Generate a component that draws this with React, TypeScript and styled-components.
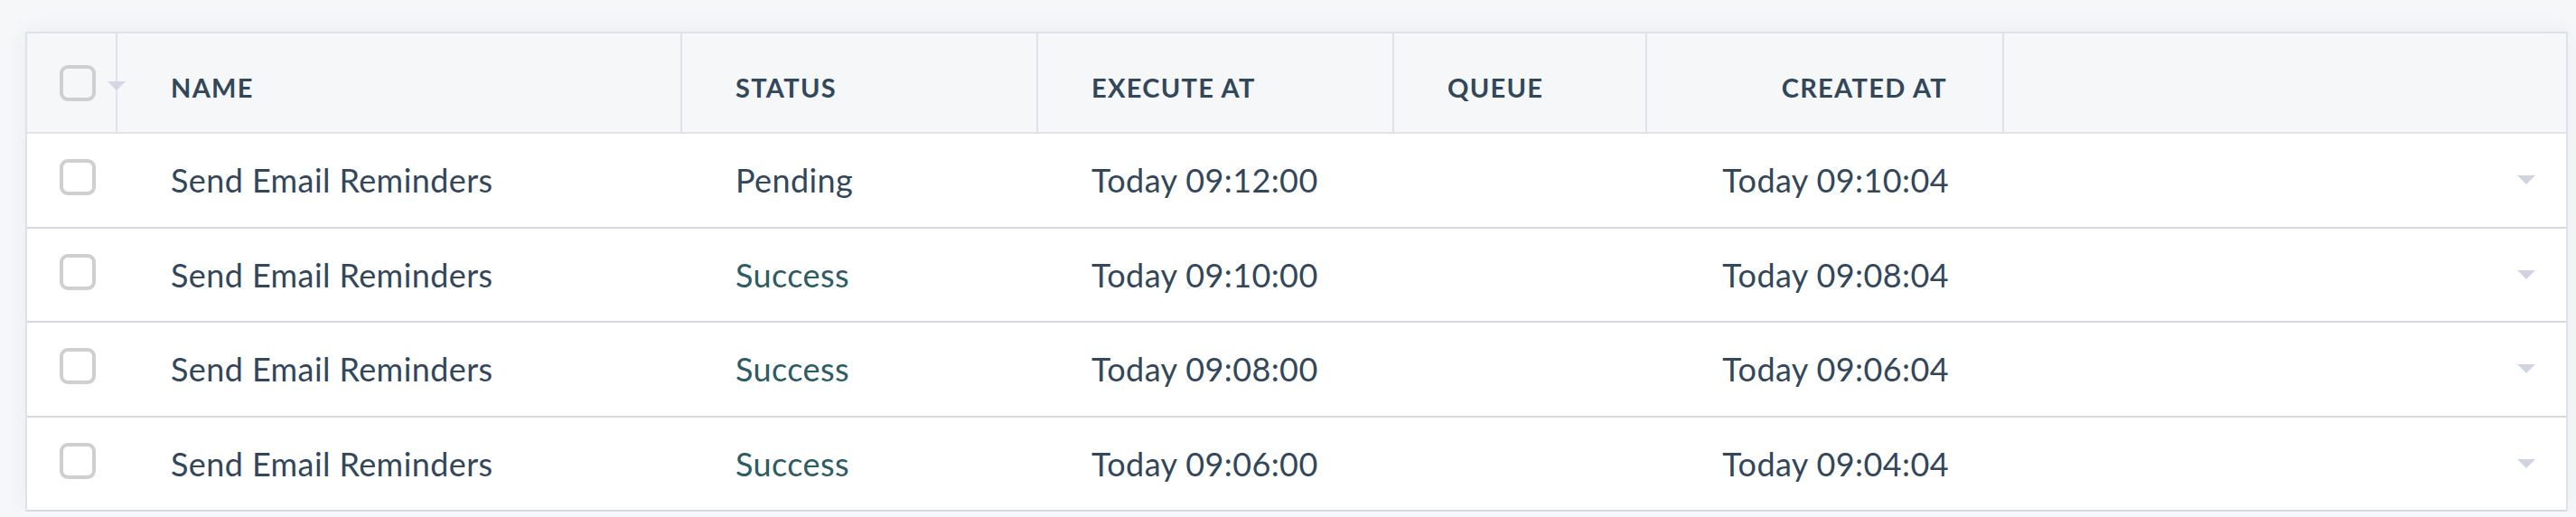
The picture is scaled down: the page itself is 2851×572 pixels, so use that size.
import * as React from 'react'
import styled, { createGlobalStyle } from 'styled-components'

const GlobalStyle = createGlobalStyle`
  body {
    margin: 0;
    background: #f5f7f9;
    font-family: Lato, "Open Sans", sans-serif;
    color: #33475b;
  }
`

const COLUMNS = '100px 625px 394px 394px 280px 395px 1fr'

const Page = styled.div`
  padding: 35px 0 0 28px;
`

const Table = styled.div`
  width: 2814px;
  box-sizing: border-box;
  border: 2px solid #dfe2ea;
  border-bottom: none;
  background: #fff;
  box-shadow: 0 0 24px rgba(45, 62, 80, 0.06);
`

const HeaderRow = styled.div`
  display: grid;
  grid-template-columns: ${COLUMNS};
  height: 109px;
  background: #f5f7f9;
  border-bottom: 2px solid #dfe2ea;
`

const HeaderCell = styled.div<{ $right?: boolean }>`
  position: relative;
  display: flex;
  align-items: center;
  justify-content: ${(p) => (p.$right ? 'flex-end' : 'flex-start')};
  padding: 10px 61px 0 59px;
  border-right: 2px solid #dfe2ea;
  font-size: 29px;
  font-weight: 700;
  letter-spacing: 1.3px;
  text-transform: uppercase;
  color: #33475b;
  &:last-child {
    border-right: none;
  }
`

const CheckCell = styled.div<{ $head?: boolean }>`
  position: relative;
  display: flex;
  align-items: center;
  padding-left: 36px;
  padding-bottom: ${(p) => (p.$head ? '0' : '6px')};
  border-right: ${(p) => (p.$head ? '2px solid #dfe2ea' : 'none')};
`

const Checkbox = styled.span<{ $head?: boolean }>`
  display: block;
  width: 40px;
  height: 40px;
  box-sizing: border-box;
  border: 4px solid #cfcfcf;
  border-radius: 9px;
  background: ${(p) => (p.$head ? 'transparent' : '#fff')};
`

const HeadCaret = styled.span`
  position: absolute;
  right: -11px;
  top: 53px;
  width: 0;
  height: 0;
  border-left: 10px solid transparent;
  border-right: 10px solid transparent;
  border-top: 10px solid #d2d7e2;
`

const Row = styled.div`
  display: grid;
  grid-template-columns: ${COLUMNS};
  height: 102.5px;
  border-bottom: 2px solid #d3d8e2;
`

const Cell = styled.div<{ $right?: boolean; $tone?: string }>`
  display: flex;
  align-items: center;
  justify-content: ${(p) => (p.$right ? 'flex-end' : 'flex-start')};
  padding: 0 61px 0 59px;
  font-size: 36px;
  letter-spacing: 0.4px;
  color: ${(p) => p.$tone || '#33475b'};
  white-space: nowrap;
`

const CaretCell = styled.div`
  display: flex;
  align-items: center;
  justify-content: flex-end;
  padding-right: 34px;
`

const Caret = styled.span`
  width: 0;
  height: 0;
  border-left: 10px solid transparent;
  border-right: 10px solid transparent;
  border-top: 10px solid #cfd5e0;
`

const jobs = [
  { name: 'Send Email Reminders', status: 'Pending', execute: 'Today 09:12:00', created: 'Today 09:10:04' },
  { name: 'Send Email Reminders', status: 'Success', execute: 'Today 09:10:00', created: 'Today 09:08:04' },
  { name: 'Send Email Reminders', status: 'Success', execute: 'Today 09:08:00', created: 'Today 09:06:04' },
  { name: 'Send Email Reminders', status: 'Success', execute: 'Today 09:06:00', created: 'Today 09:04:04' },
]

const App = () => (
  <Page>
    <GlobalStyle />
    <Table>
      <HeaderRow>
        <CheckCell $head>
          <Checkbox $head />
          <HeadCaret />
        </CheckCell>
        <HeaderCell>Name</HeaderCell>
        <HeaderCell>Status</HeaderCell>
        <HeaderCell>Execute At</HeaderCell>
        <HeaderCell>Queue</HeaderCell>
        <HeaderCell $right>Created At</HeaderCell>
        <HeaderCell />
      </HeaderRow>
      {jobs.map((job, i) => (
        <Row key={i}>
          <CheckCell>
            <Checkbox />
          </CheckCell>
          <Cell>{job.name}</Cell>
          <Cell $tone={job.status === 'Success' ? '#2d5c62' : undefined}>{job.status}</Cell>
          <Cell>{job.execute}</Cell>
          <Cell />
          <Cell $right>{job.created}</Cell>
          <CaretCell>
            <Caret />
          </CaretCell>
        </Row>
      ))}
    </Table>
  </Page>
)

export default App
